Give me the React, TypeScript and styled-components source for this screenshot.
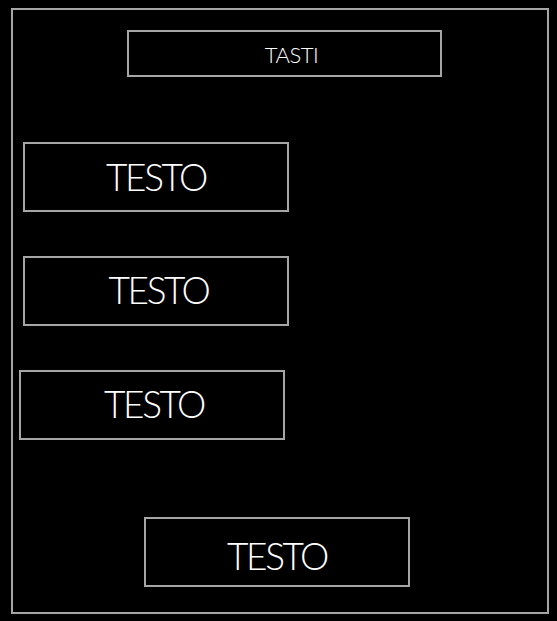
import React from "react";
import styled, { createGlobalStyle } from "styled-components";

const GlobalStyle = createGlobalStyle`
  html, body {
    margin: 0;
    padding: 0;
    background: #000;
  }
  body {
    font-family: "Lato", "Open Sans", sans-serif;
  }
`;

const Page = styled.div`
  width: 557px;
  height: 621px;
  background: #000;
  padding: 8px 0 0 11px;
  box-sizing: border-box;
`;

const Frame = styled.div`
  width: 538px;
  height: 606px;
  box-sizing: border-box;
  border: 2px solid #a6a6a6;
  display: flex;
  flex-direction: column;
  align-items: flex-start;
`;

const Header = styled.div`
  margin: 20px 0 0 114px;
  width: 315px;
  height: 47px;
  box-sizing: border-box;
  border: 2px solid #a6a6a6;
  display: flex;
  align-items: center;
  justify-content: center;
  padding: 2px 0 0 14px;
  color: #fff;
  font-size: 22px;
  font-weight: 300;
  letter-spacing: -0.5px;
`;

const TextBox = styled.div<{ $left: number; $top: number; $shift: number; $dy: number }>`
  margin: ${(p) => p.$top}px 0 0 ${(p) => p.$left}px;
  width: 266px;
  height: 70px;
  box-sizing: border-box;
  border: 2px solid #a6a6a6;
  display: flex;
  align-items: center;
  justify-content: center;
  padding-left: ${(p) => p.$shift}px;
  padding-top: ${(p) => Math.max(p.$dy, 0)}px;
  padding-bottom: ${(p) => Math.max(-p.$dy, 0)}px;
  color: #fff;
  font-size: 37px;
  font-weight: 300;
  letter-spacing: -2.4px;
`;

const boxes = [
  { left: 10, top: 65, shift: 0, dy: -1 },
  { left: 10, top: 44, shift: 5, dy: -3 },
  { left: 6, top: 44, shift: 4, dy: -3 },
  { left: 131, top: 77, shift: -7, dy: 6 },
];

export default function App() {
  return (
    <>
      <GlobalStyle />
      <Page>
        <Frame>
          <Header>TASTI</Header>
          {boxes.map((b, i) => (
            <TextBox key={i} $left={b.left} $top={b.top} $shift={b.shift} $dy={b.dy}>
              TESTO
            </TextBox>
          ))}
        </Frame>
      </Page>
    </>
  );
}
